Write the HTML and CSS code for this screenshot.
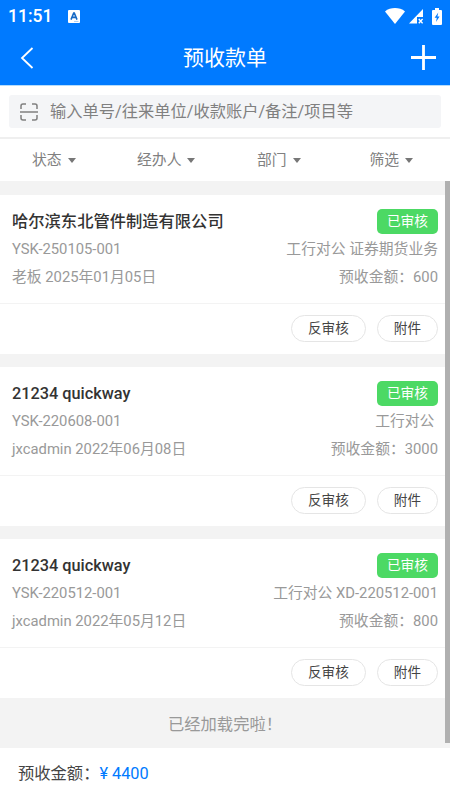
FILE: index.html
```html
<!DOCTYPE html>
<html lang="zh-CN">
<head>
  <meta charset="UTF-8" />
  <meta name="viewport" content="width=device-width, initial-scale=1.0"/>
  <title>预收款单</title>
  <link rel="stylesheet" href="styles.css">
</head>
<body>
  <div class="status-bar">
    <span class="time">11:51</span>
    <svg class="ime" width="12" height="13" viewBox="0 0 12 13">
      <rect width="12" height="13" rx="1" fill="#fff"/>
      <path d="M3 9.6 5.7 3h.6L9 9.6M4 7.4h4" fill="none" stroke="#1769c4" stroke-width="1.6"/>
      <path d="M6 11.4h4.5" stroke="#a9cdf5" stroke-width="1"/>
    </svg>
    <div class="status-icons">
      <svg width="20" height="16" viewBox="0 0 20 16">
        <path d="M0 3.4C5.5-1 14.5-1 20 3.4L10 16z" fill="#fff"/>
      </svg>
      <svg width="14" height="15" viewBox="0 0 14 15">
        <path d="M14 0v8H8v6.5H0z" fill="#fff"/>
        <path d="M9.8 10l3.8 4.3M13.6 10l-3.8 4.3" stroke="#fff" stroke-width="1.4"/>
      </svg>
      <svg class="battery" width="10" height="17" viewBox="0 0 10 17">
        <path d="M3 0h4v2h2a1 1 0 0 1 1 1v13a1 1 0 0 1-1 1H1a1 1 0 0 1-1-1V3a1 1 0 0 1 1-1h2z" fill="#fff"/>
        <path d="M6.3 4.5 2.6 9.8h2.2L4 14l3.6-5.4H5.4z" fill="#007aff"/>
      </svg>
    </div>
  </div>

  <div class="nav-bar">
    <svg width="14" height="22" viewBox="0 0 14 22">
      <path d="M12.5 1 2 11l10.5 10" fill="none" stroke="#fff" stroke-width="1.8"/>
    </svg>
    <h1>预收款单</h1>
    <svg width="25" height="25" viewBox="0 0 25 25">
      <path d="M12.5 0v25M0 12.5h25" stroke="#fff" stroke-width="2.8"/>
    </svg>
  </div>

  <div class="search">
    <div class="search-box">
      <svg width="18" height="18" viewBox="0 0 18 18" fill="none" stroke="#808080" stroke-width="1.5">
        <path d="M1 6V3a2 2 0 0 1 2-2h3M12 1h3a2 2 0 0 1 2 2v3M17 12v3a2 2 0 0 1-2 2h-3M6 17H3a2 2 0 0 1-2-2v-3M0 9h18"/>
      </svg>
      <span>输入单号/往来单位/收款账户/备注/项目等</span>
    </div>
  </div>

  <div class="filters">
    <div class="filter">状态<i class="arrow"></i></div>
    <div class="filter">经办人<i class="arrow"></i></div>
    <div class="filter">部门<i class="arrow"></i></div>
    <div class="filter">筛选<i class="arrow"></i></div>
  </div>

  <div class="list">
    <div class="card">
      <div class="card-body">
        <div class="row"><span class="name">哈尔滨东北管件制造有限公司</span><span class="badge">已审核</span></div>
        <div class="row"><span>YSK-250105-001</span><span>工行对公 证券期货业务</span></div>
        <div class="row"><span>老板 2025年01月05日</span><span>预收金额：600</span></div>
      </div>
      <div class="actions"><button>反审核</button><button>附件</button></div>
    </div>

    <div class="card">
      <div class="card-body">
        <div class="row"><span class="name">21234 quickway</span><span class="badge">已审核</span></div>
        <div class="row"><span>YSK-220608-001</span><span>工行对公&nbsp;</span></div>
        <div class="row"><span>jxcadmin 2022年06月08日</span><span>预收金额：3000</span></div>
      </div>
      <div class="actions"><button>反审核</button><button>附件</button></div>
    </div>

    <div class="card">
      <div class="card-body">
        <div class="row"><span class="name">21234 quickway</span><span class="badge">已审核</span></div>
        <div class="row"><span>YSK-220512-001</span><span>工行对公 XD-220512-001</span></div>
        <div class="row"><span>jxcadmin 2022年05月12日</span><span>预收金额：800</span></div>
      </div>
      <div class="actions"><button>反审核</button><button>附件</button></div>
    </div>

    <div class="load-end">已经加载完啦！</div>
    <div class="scrollbar"></div>
  </div>

  <div class="total">预收金额：<span class="amount">¥ 4400</span></div>
</body>
</html>
```

FILE: styles.css
```css
:root {
  --blue: #007aff;
  --green: #4cd964;
  --gray-bg: #f3f3f3;
  --gray-text: #999;
}

* {
  box-sizing: border-box;
}

body {
  margin: 0;
  height: 800px;
  display: flex;
  flex-direction: column;
  overflow: hidden;
  font-family: Roboto, "Noto Sans CJK SC", sans-serif;
  background: #fff;
  color: #444;
}

svg {
  display: block;
  flex: none;
}

.status-bar {
  height: 32px;
  display: flex;
  align-items: center;
  padding: 0 8px;
  background: var(--blue);
  color: #fff;
}

.time {
  width: 60px;
  font-size: 17.5px;
  font-weight: 500;
}

.status-icons {
  display: flex;
  align-items: center;
  gap: 4px;
  margin-left: auto;
}

.battery {
  margin-left: 5px;
}

.nav-bar {
  height: 53px;
  display: flex;
  align-items: center;
  justify-content: space-between;
  padding: 0 14px 2px 20px;
  background: var(--blue);
  color: #fff;
}

.nav-bar h1 {
  margin: 0;
  padding-left: 5px;
  font-size: 21px;
  font-weight: 400;
  line-height: 28px;
}

.search {
  height: 54px;
  padding: 9px 9px 10px;
  border-top: 1px solid #b5dcfb;
  border-bottom: 2px solid #efefef;
}

.search-box {
  height: 33px;
  display: flex;
  align-items: center;
  gap: 12px;
  padding-left: 11px;
  border-radius: 3px;
  background: #f4f5f7;
  color: #808080;
  font-size: 16.25px;
  line-height: 33px;
}

.filters {
  height: 42px;
  display: flex;
  font-size: 14.8px;
  line-height: 42px;
  color: #808080;
}

.filter {
  flex: 1;
  display: flex;
  align-items: center;
  justify-content: center;
  gap: 6px;
  padding-right: 5px;
}

.arrow {
  border: 4px solid transparent;
  border-top: 5px solid #777;
  border-bottom: 0;
}

.list {
  position: relative;
  height: 567px;
  padding-top: 14px;
  background: var(--gray-bg);
}

.card {
  height: 159px;
  margin-bottom: 13px;
  background: #fff;
}

.card-body {
  height: 109px;
  padding: 12px 12px 0;
  border-bottom: 1px solid #f3f3f3;
}

.row {
  height: 28px;
  display: flex;
  align-items: center;
  justify-content: space-between;
  font-size: 14.8px;
  line-height: 28px;
  color: var(--gray-text);
}

.name {
  padding-top: 2px;
  font-size: 16.3px;
  font-weight: 500;
  color: #333;
}

.badge {
  height: 25px;
  padding: 0 10px;
  border-radius: 5px;
  background: var(--green);
  color: #fff;
  font-size: 13.7px;
  line-height: 25px;
}

.actions {
  display: flex;
  justify-content: flex-end;
  gap: 11px;
  padding: 11px 12px 0;
}

.actions button {
  height: 27px;
  padding: 0 16px;
  border: 1px solid #e5e5e5;
  border-radius: 14px;
  background: #fff;
  color: #444;
  font-family: inherit;
  font-size: 13.6px;
  line-height: 25px;
}

.load-end {
  height: 50px;
  margin-top: -13px;
  font-size: 16.3px;
  line-height: 53px;
  text-align: center;
  color: var(--gray-text);
}

/* overlays the right edge of the list */
.scrollbar {
  position: absolute;
  top: 0;
  right: 0;
  width: 5px;
  height: 562px;
  background: #b0b0b0;
}

.total {
  flex: 1;
  padding-left: 18px;
  font-size: 16.3px;
  line-height: 52px;
}

.amount {
  color: var(--blue);
}
```
